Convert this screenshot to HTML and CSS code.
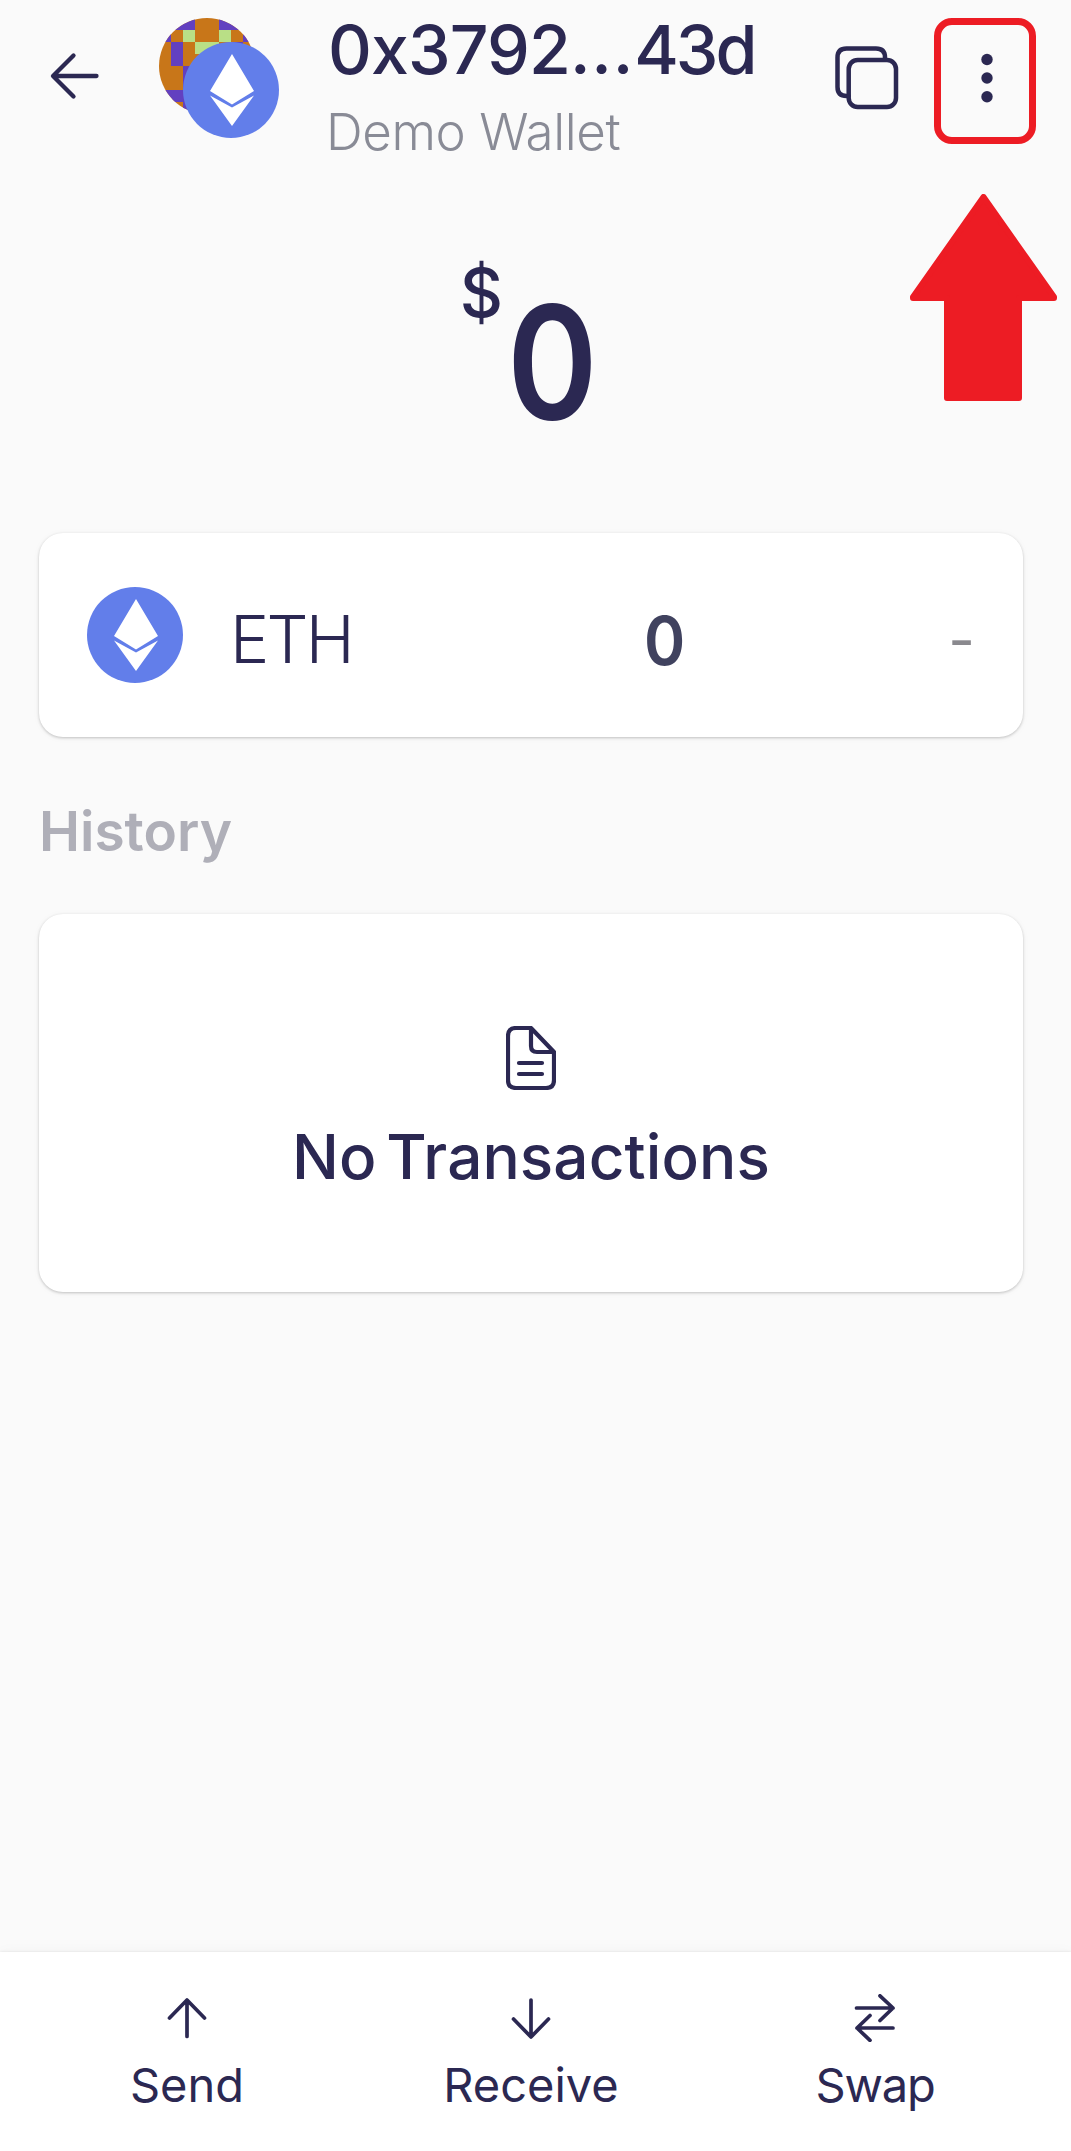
FILE: index.html
```
<!DOCTYPE html>
<html lang="en">
<head>
<meta charset="utf-8">
<title>Demo Wallet</title>
<link rel="stylesheet" href="styles.css">
</head>
<body>
<svg class="defs" aria-hidden="true">
  <symbol id="eth" viewBox="0 0 96 96">
    <circle cx="48" cy="48" r="48" fill="#627eea"/>
    <path fill="#fff" d="M49 12 27 49l22 13.500 22-13.500zM27 53.500 49 84l22-30.500L49 65.500z"/>
  </symbol>
</svg>
<div class="screen">
  <header class="header">
    <svg class="back" viewBox="0 0 52 52" fill="none"><path d="M47.500 26H4.500M24.500 5.500 4 26l20.500 20.500"/></svg>
    <div class="avatar">
      <svg class="identicon" viewBox="0 0 8 8" shape-rendering="crispEdges">
        <rect width="8" height="8" fill="#c87619"/>
        <path fill="#6240c0" d="M0 0h3v1H0zM5 0h3v1H5zM0 1h1v1H0zM7 1h1v1H7zM1 2h1v2H1zM6 2h1v2H6zM2 4h1v2H2zM0 6h3v1H0zM2 7h1v1H2z"/>
        <path fill="#b9df86" d="M2 1h1v1H2zM5 1h1v1H5zM3 2h2v1H3z"/>
      </svg>
      <svg class="badge"><use href="#eth"/></svg>
    </div>
    <div class="account">
      <h1 class="address">0x3792<span class="dotted">...</span><span class="tail">43d</span></h1>
      <p class="name">Demo Wallet</p>
    </div>
    <svg class="copy" viewBox="0 0 64 64" fill="none"><path d="M50 13.500v-2q0-9-9-9H11.500q-9 0-9 9V41q0 9 9 9h2"/><rect x="13.700" y="14" width="47.300" height="47" rx="9"/></svg>
    <div class="menu">
      <svg class="dots" viewBox="0 0 12 50"><circle cx="6" cy="6.500" r="5.700"/><circle cx="6" cy="25" r="5.700"/><circle cx="6" cy="43.700" r="5.700"/></svg>
      <svg class="pointer" viewBox="0 0 147 207"><path d="M73.500 3 144 103v1h-35v100H37V104H3v-1z"/></svg>
    </div>
  </header>

  <section class="balance">
    <span class="currency">$</span><span class="total">0</span>
  </section>

  <section class="card asset">
    <svg class="logo"><use href="#eth"/></svg>
    <span class="symbol">ETH</span>
    <span class="amount">0</span>
    <span class="value">-</span>
  </section>

  <h2 class="heading">History</h2>

  <section class="card empty">
    <svg class="doc" viewBox="0 0 50 64" fill="none"><path d="M25 2H10q-8 0-8 8v44q0 8 8 8h30q8 0 8-8V26zM25 2v18q0 6 6 6h17M13 37h23M13 48h23"/></svg>
    <p class="message">No Transactions</p>
  </section>

  <nav class="nav">
    <a class="action"><svg class="icon" viewBox="0 0 48 48" fill="none"><path d="M24 6v36.500M6.500 24 24 6l17.500 18"/></svg>Send</a>
    <a class="action"><svg class="icon" viewBox="0 0 48 48" fill="none"><path d="M24 6v36.500M6.500 25 24 43l17.500-18"/></svg>Receive</a>
    <a class="action swap"><svg class="icon" viewBox="0 0 48 48" fill="none"><path d="M5.500 14H42M29 1.800 42 14 29 26.500M42 34H6M19 21.500 6 34l13 12.300"/></svg>Swap</a>
  </nav>
</div>
</body>
</html>
```
FILE: styles.css
```
* { box-sizing: border-box; margin: 0; }

body {
  background: #fafafa;
  color: #2b2852;
  font-family: Inter, "Noto Sans", sans-serif;
}

.defs { display: none; }

.screen {
  display: flex;
  flex-direction: column;
  height: 2151px;
  overflow: hidden;
}

svg { display: block; flex: none; }

.back, .copy, .doc, .icon {
  stroke: #2b2852;
  stroke-width: 4.200;
  stroke-linecap: round;
  stroke-linejoin: round;
}

/* Header */
.header {
  display: flex;
  align-items: flex-start;
  height: 254px;
  padding-left: 49px;
}

.back { width: 52px; height: 52px; margin-top: 50px; stroke-width: 4.300; }

.avatar {
  position: relative;
  width: 120px;
  height: 120px;
  margin: 18px 0 0 58px;
}

.identicon { width: 96px; height: 96px; border-radius: 50%; }

.badge {
  position: absolute;
  left: 24px;
  top: 24px;
  width: 96px;
  height: 96px;
}

.account { width: 507px; padding: 8px 0 0 47px; white-space: nowrap; }

.address {
  margin-left: 2px;
  font-size: 68px;
  font-weight: 550;
  line-height: 82px;
  letter-spacing: -0.900px;
}

.dotted { letter-spacing: 0.800px; }

.tail { letter-spacing: -3px; }

.name {
  margin-top: 11px;
  color: #898b96;
  font-size: 51px;
  font-weight: 300;
  line-height: 62px;
  letter-spacing: -0.400px;
}

.copy { width: 64px; height: 64px; margin: 46px 0 0 49px; stroke-width: 4.500; }

.menu {
  position: relative;
  display: flex;
  justify-content: center;
  width: 102px;
  height: 126px;
  margin: 18px 0 0 35px;
  padding: 28px 0 0 4px;
  border: 7px solid #ed1c24;
  border-radius: 18px;
}

.dots { width: 12px; height: 50px; fill: #2b2852; }

.pointer {
  position: absolute;
  left: -31px;
  top: 169px;
  width: 147px;
  height: 207px;
  fill: #ed1c24;
  stroke: #ed1c24;
  stroke-width: 6;
  stroke-linejoin: round;
}

/* Balance */
.balance {
  display: flex;
  justify-content: center;
  gap: 4px;
  height: 279px;
}

.currency { font-size: 67px; font-weight: 550; line-height: 78px; }

.total {
  padding-top: 28px;
  font-size: 158px;
  font-weight: 600;
  line-height: 160px;
  transform: scaleX(0.870);
  transform-origin: left;
}

/* Cards */
.card {
  width: 984px;
  margin-left: 39px;
  border-radius: 24px;
  background: #fff;
  box-shadow: 0 1px 3px rgba(0, 0, 0, 0.220), 0 1px 8px rgba(0, 0, 0, 0.030);
}

.asset {
  display: grid;
  grid-template-columns: 142px 415px auto 1fr;
  align-items: center;
  height: 204px;
  padding: 0 48px;
}

.logo { width: 96px; height: 96px; }

.symbol {
  padding: 8px 0 0 1px;
  font-size: 66px;
  font-weight: 320;
  line-height: 80px;
  letter-spacing: -2.800px;
}

.amount {
  padding-top: 10px;
  color: #40425f;
  font-size: 68px;
  font-weight: 600;
  line-height: 80px;
  transform: scaleX(0.920);
  transform-origin: left;
}

.value {
  padding-top: 10px;
  color: #8a898e;
  font-size: 58px;
  line-height: 80px;
  text-align: right;
}

.heading {
  margin: 61px 0 50px 39px;
  color: #afafb8;
  font-size: 55px;
  font-weight: 600;
  line-height: 66px;
}

.empty {
  display: flex;
  flex-direction: column;
  align-items: center;
  gap: 30px;
  height: 378px;
  padding-top: 112px;
}

.doc { width: 50px; height: 64px; }

.message {
  font-size: 62px;
  font-weight: 500;
  line-height: 74px;
  letter-spacing: 0.100px;
  word-spacing: -7px;
}

/* Bottom actions */
.nav {
  display: grid;
  grid-template-columns: repeat(3, 344px);
  height: 199px;
  margin-top: auto;
  padding: 42px 0 0 15px;
  background: #fff;
  box-shadow: 0 -1px 2px rgba(0, 0, 0, 0.060), 0 -3px 12px rgba(0, 0, 0, 0.020);
}

.action {
  display: flex;
  flex-direction: column;
  align-items: center;
  gap: 14px;
  font-size: 47px;
  line-height: 58px;
}

.icon { width: 48px; height: 48px; stroke-width: 3.700; }

.swap { letter-spacing: -1.200px; }
```
